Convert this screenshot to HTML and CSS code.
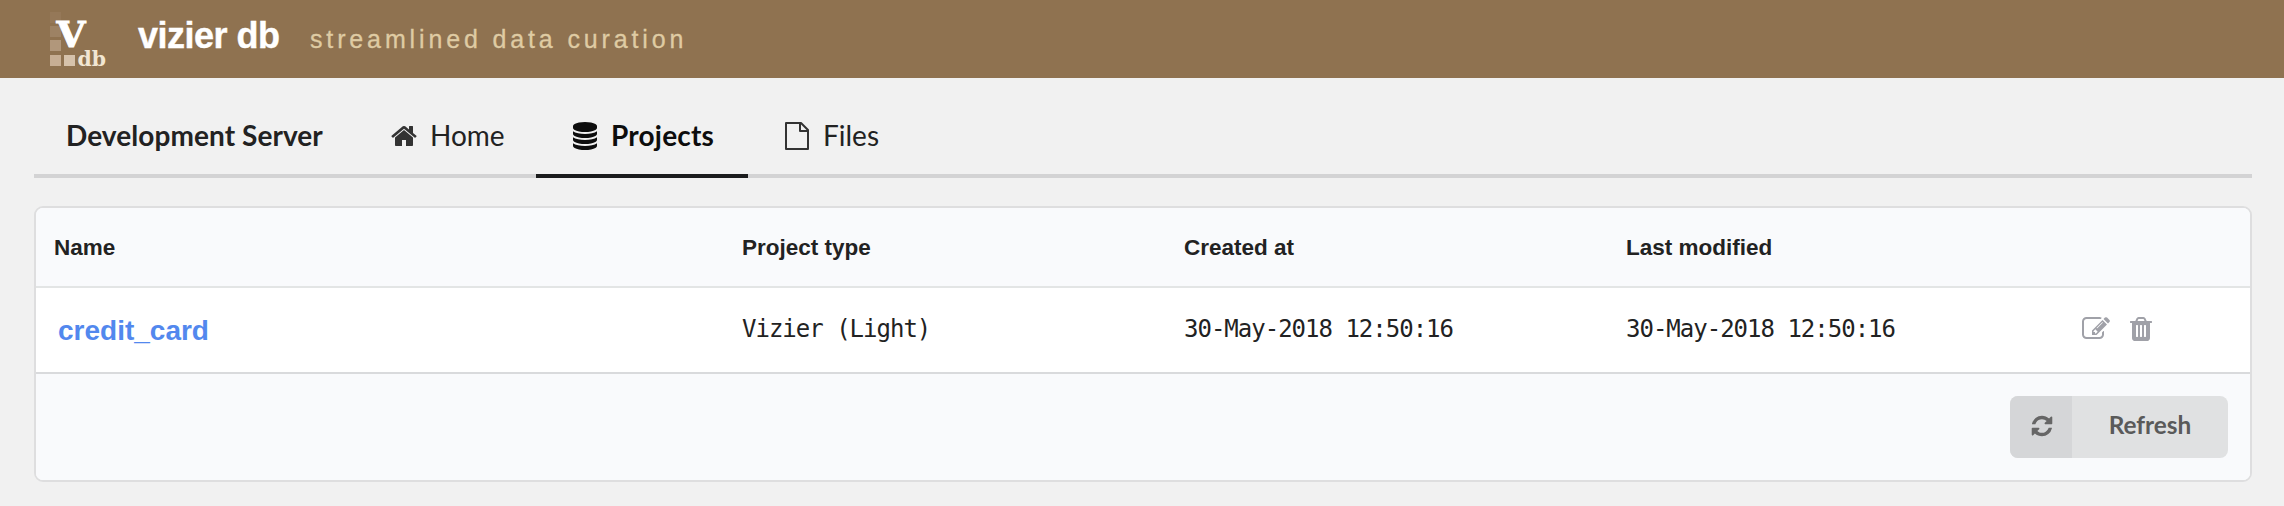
FILE: index.html
```html
<!DOCTYPE html>
<html lang="en">
<head>
<meta charset="utf-8">
<title>vizier db</title>
<link rel="stylesheet" href="styles.css">
</head>
<body>
<header class="topbar">
  <svg class="logo" viewBox="0 0 64 64">
    <rect x="5" y="5" width="11" height="11" fill="#957858"/>
    <rect x="5" y="19" width="11" height="11" fill="#9d8264"/>
    <rect x="5" y="33" width="11" height="11" fill="#b1977b"/>
    <rect x="5" y="48" width="11" height="11" fill="#c7ae94"/>
    <rect x="19" y="48" width="11" height="11" fill="#d6c2ab"/>
    <text class="logo-v" x="11.500" y="40" textLength="29" lengthAdjust="spacingAndGlyphs">V</text>
    <text class="logo-db" x="32.500" y="58.500" textLength="28.500" lengthAdjust="spacingAndGlyphs">db</text>
  </svg>
  <span class="brand">vizier db</span>
  <span class="tagline">streamlined data curation</span>
</header>
<main class="page">
  <nav class="menu">
    <div class="item title"><span>Development Server</span></div>
    <a class="item home"><svg class="icon" viewBox="0 0 1792 1792"><path d="M1472 992v480q0 26-19 45t-45 19h-384v-384h-256v384h-384q-26 0-45-19t-19-45v-480q0-1 .5-3t.5-3l575-474 575 474q1 2 1 6zm223-69l-62 74q-8 9-21 11h-3q-13 0-21-7l-692-577-692 577q-12 8-24 7-13-2-21-11l-62-74q-8-10-7-23.500t11-21.500l719-599q32-26 76-26t76 26l244 204v-195q0-14 9-23t23-9h192q14 0 23 9t9 23v408l219 182q10 8 11 21.500t-7 23.500z"/></svg><span>Home</span></a>
    <a class="item projects active"><svg class="icon" viewBox="0 0 1792 1792"><path d="M896 768q237 0 443-43t325-127v170q0 69-103 128t-280 93.500-385 34.500-385-34.500-280-93.500-103-128v-170q119 84 325 127t443 43zm0 768q237 0 443-43t325-127v170q0 69-103 128t-280 93.500-385 34.500-385-34.500-280-93.500-103-128v-170q119 84 325 127t443 43zm0-384q237 0 443-43t325-127v170q0 69-103 128t-280 93.500-385 34.500-385-34.500-280-93.500-103-128v-170q119 84 325 127t443 43zm0-1152q208 0 385 34.500t280 93.500 103 128v128q0 69-103 128t-280 93.500-385 34.500-385-34.500-280-93.500-103-128v-128q0-69 103-128t280-93.500 385-34.500z"/></svg><span>Projects</span></a>
    <a class="item files"><svg class="icon outline" viewBox="0 0 28 28"><path d="M3 1h15l7 7v19H3zM17 1v8h8"/></svg><span>Files</span></a>
  </nav>
  <section class="table">
    <div class="row head">
      <div class="cell">Name</div><div class="cell">Project type</div><div class="cell">Created at</div><div class="cell">Last modified</div><div class="cell"></div>
    </div>
    <div class="row data">
      <div class="cell"><a class="link">credit_card</a></div>
      <div class="cell mono">Vizier (Light)</div>
      <div class="cell mono">30-May-2018 12:50:16</div>
      <div class="cell mono">30-May-2018 12:50:16</div>
      <div class="actions">
        <svg class="icon" viewBox="0 0 1792 1792"><path d="M888 1184l116-116-152-152-116 116v56h96v96h56zm440-720q-16-16-33 1l-350 350q-17 17-1 33t33-1l350-350q17-17 1-33zm80 594v190q0 119-84.500 203.500t-203.500 84.500h-832q-119 0-203.500-84.500t-84.500-203.500v-832q0-119 84.500-203.500t203.500-84.500h832q63 0 117 25 15 7 18 23 3 17-9 29l-49 49q-14 14-32 8-23-6-45-6h-832q-66 0-113 47t-47 113v832q0 66 47 113t113 47h832q66 0 113-47t47-113v-126q0-13 9-22l64-64q15-15 35-7t20 29zm-96-738l288 288-672 672h-288v-288zm444 132l-92 92-288-288 92-92q28-28 68-28t68 28l152 152q28 28 28 68t-28 68z"/></svg>
        <svg class="icon" viewBox="0 0 1792 1792"><path d="M704 1376v-704q0-14-9-23t-23-9h-64q-14 0-23 9t-9 23v704q0 14 9 23t23 9h64q14 0 23-9t9-23zm256 0v-704q0-14-9-23t-23-9h-64q-14 0-23 9t-9 23v704q0 14 9 23t23 9h64q14 0 23-9t9-23zm256 0v-704q0-14-9-23t-23-9h-64q-14 0-23 9t-9 23v704q0 14 9 23t23 9h64q14 0 23-9t9-23zm-544-992h448l-48-117q-7-9-17-11h-317q-10 2-17 11zm928 32v64q0 14-9 23t-23 9h-96v948q0 83-47 143.500t-113 60.500h-832q-66 0-113-58.500t-47-141.500v-952h-96q-14 0-23-9t-9-23v-64q0-14 9-23t23-9h309l70-167q15-37 54-63t79-26h320q40 0 79 26t54 63l70 167h309q14 0 23 9t9 23z"/></svg>
      </div>
    </div>
    <div class="foot">
      <button class="button">
        <span class="button-icon"><svg viewBox="0 0 1792 1792"><path d="M1639 1056q0 5-1 7-64 268-268 434.500t-478 166.500q-146 0-282.500-55t-243.500-157l-129 129q-19 19-45 19t-45-19-19-45v-448q0-26 19-45t45-19h448q26 0 45 19t19 45-19 45l-137 137q71 66 161 102t187 36q134 0 250-65t186-179q11-17 53-117 8-23 30-23h192q13 0 22.500 9.500t9.500 22.500zm25-800v448q0 26-19 45t-45 19h-448q-26 0-45-19t-19-45 19-45l138-138q-148-137-349-137-134 0-250 65t-186 179q-11 17-53 117-8 23-30 23h-199q-13 0-22.500-9.500t-9.500-22.500v-7q65-268 270-434.500t480-166.500q146 0 284 55.500t245 156.500l130-129q19-19 45-19t45 19 19 45z"/></svg></span>
        <span class="button-label">Refresh</span>
      </button>
    </div>
  </section>
</main>
</body>
</html>
```
FILE: styles.css
```css
* { box-sizing: border-box; }
body { margin: 0; height: 506px; background: #f1f1f1; color: #222; font-family: Lato, sans-serif; overflow: hidden; }
svg { display: block; flex: none; }

.topbar { display: flex; height: 78px; padding-left: 45px; background: #8f7250; font-family: "Liberation Sans", Arial, sans-serif; white-space: nowrap; }
.logo { width: 64px; height: 64px; margin-top: 7px; }
.logo-v { font: bold 36px "DejaVu Serif", serif; fill: #fff; stroke: #fff; stroke-width: 1; }
.logo-db { font: bold 20px "DejaVu Serif", serif; fill: #f2e6d2; }
.brand { width: 172px; margin-left: 29px; padding-top: 15px; color: #fff; font-size: 36px; font-weight: bold; line-height: 41px; letter-spacing: -0.5px; -webkit-text-stroke: 0.4px #fff; }
.tagline { padding-top: 24px; color: #dfcba3; font-size: 25px; line-height: 30px; letter-spacing: 3.86px; -webkit-text-stroke: 0.3px #dfcba3; }

.page { padding: 0 32px 0 34px; }
.menu { display: flex; height: 100px; border-bottom: 4px solid #d3d3d4; font-size: 28px; }
.item { display: flex; align-items: center; height: 100px; padding-top: 16px; }
.item span { padding-bottom: 2px; white-space: nowrap; }
.title { width: 323px; padding-left: 32px; font-weight: bold; letter-spacing: 0.07px; }
.home { width: 179px; padding-left: 33px; }
.projects { width: 212px; padding-left: 35px; letter-spacing: 0.2px; }
.files { padding-left: 35px; }
.active { border-bottom: 4px solid #1b1c1d; color: #0d0d0d; font-weight: bold; padding-top: 20px; }
.icon { width: 28px; height: 28px; fill: #333; }
.item .icon { margin-right: 12px; }
.active .icon { fill: #0d0d0d; }
.outline { stroke: #333; stroke-width: 2; stroke-linejoin: round; }
.item .outline { fill: none; }

.table { margin-top: 28px; height: 276px; border: 2px solid #dededf; border-radius: 9px; background: #fff; overflow: hidden; font-family: "Liberation Sans", Arial, sans-serif; }
.row { display: grid; grid-template-columns: 688px 442px 442px 442px 1fr; align-items: center; }
.cell { padding-left: 18px; white-space: nowrap; }
.head { height: 80px; padding-top: 2px; border-bottom: 2px solid #e3e5e5; background: #f9fafc; font-size: 22.5px; font-weight: bold; }
.data { height: 84px; }
.data .cell:first-child { padding-top: 2px; }
.link { padding-left: 4px; color: #5288ee; font-size: 28px; font-weight: bold; }
.data .mono { padding-bottom: 3px; font-family: "DejaVu Sans Mono", monospace; font-size: 24px; letter-spacing: -1px; }
.actions { display: flex; gap: 17px; padding: 0 0 3px 32px; }
.actions .icon { fill: #a0a1a8; }
.foot { display: flex; justify-content: flex-end; height: 110px; padding: 22px 22px 0 0; border-top: 2px solid #d9dadc; background: #f9fafc; }
.button { display: flex; width: 218px; height: 62px; padding: 0; border: 0; border-radius: 8px; overflow: hidden; background: #e0e1e2; color: #5a5a5a; font: bold 24.4px Lato, sans-serif; }
.button-icon { display: flex; align-items: center; justify-content: center; width: 62px; height: 62px; padding: 0 0 2px 1px; background: #d5d6d8; }
.button-icon svg { width: 24px; height: 24px; fill: #666; }
.button-label { flex: 1; line-height: 58px; text-align: center; }
```
